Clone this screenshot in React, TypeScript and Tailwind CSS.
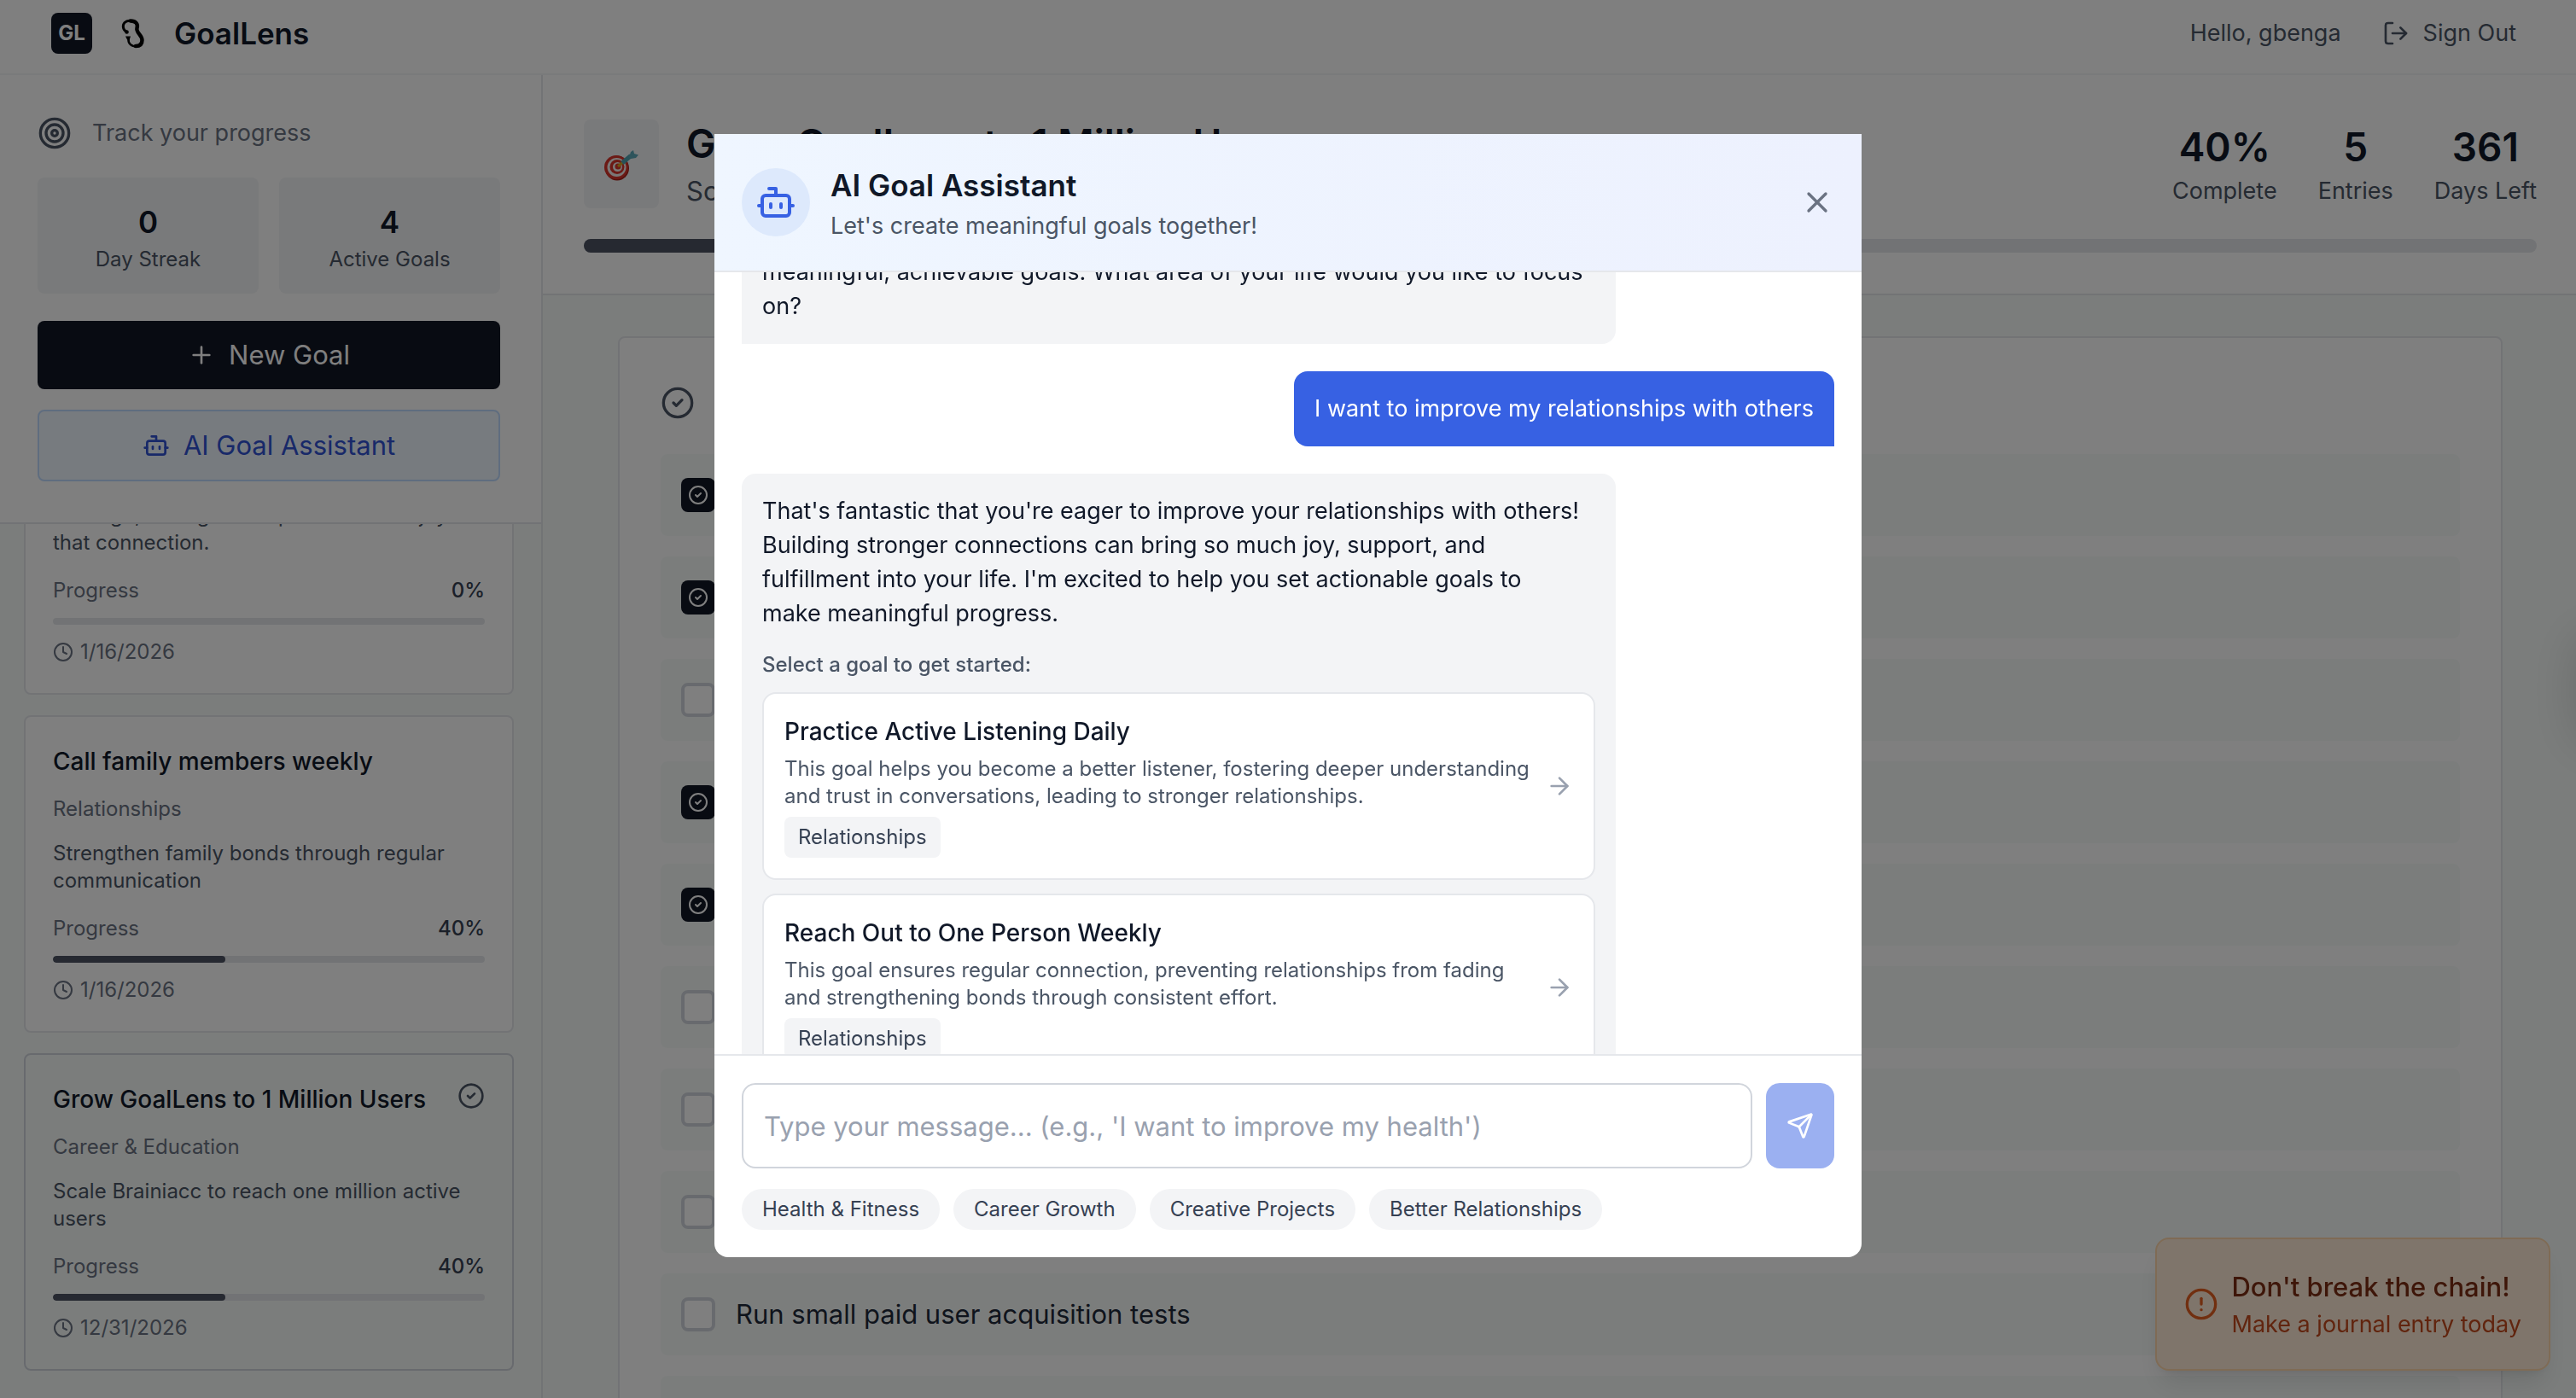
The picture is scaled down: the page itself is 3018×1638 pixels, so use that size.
import { useEffect, useRef } from 'react';
import {
  ArrowRight,
  Bot,
  CircleAlert,
  CircleCheck,
  Clock,
  LogOut,
  Plus,
  Target,
  X,
} from 'lucide-react';

type Goal = {
  title: string;
  category: string;
  description: string;
  progress: number;
  date: string;
  selected?: boolean;
};

const goals: Goal[] = [
  {
    title: 'Reconnect with old friends',
    category: 'Relationships',
    description: 'Through, asking more questions to enjoy that connection.',
    progress: 0,
    date: '1/16/2026',
  },
  {
    title: 'Call family members weekly',
    category: 'Relationships',
    description: 'Strengthen family bonds through regular communication',
    progress: 40,
    date: '1/16/2026',
  },
  {
    title: 'Grow GoalLens to 1 Million Users',
    category: 'Career & Education',
    description: 'Scale Brainiacc to reach one million active users',
    progress: 40,
    date: '12/31/2026',
    selected: true,
  },
];

const steps = [
  { done: true },
  { done: true },
  { done: false },
  { done: true },
  { done: true },
  { done: false },
  { done: false },
  { done: false },
  { done: false, label: 'Run small paid user acquisition tests' },
  { done: false },
];

const suggestions = [
  {
    title: 'Practice Active Listening Daily',
    description:
      'This goal helps you become a better listener, fostering deeper understanding and trust in conversations, leading to stronger relationships.',
    category: 'Relationships',
  },
  {
    title: 'Reach Out to One Person Weekly',
    description:
      'This goal ensures regular connection, preventing relationships from fading and strengthening bonds through consistent effort.',
    category: 'Relationships',
  },
];

const quickPrompts = [
  'Health & Fitness',
  'Career Growth',
  'Creative Projects',
  'Better Relationships',
];

function BrandMark() {
  return (
    <svg width="28" height="36" viewBox="0 0 28 36" fill="none" strokeLinecap="round">
      <path d="M6 16 C1.500 14 1.500 8 4 5.500 C6 3.500 9 3 12 3.500" stroke="black" strokeWidth="3" />
      <path
        d="M11 3.500 C17 3.500 20 7 18.500 12 C17 17 24.500 20 24.500 26 C24.500 31.500 21 33 17 33"
        stroke="black"
        strokeWidth="4.500"
      />
      <path d="M18 33.500 C12 33.500 8 30 8.500 24.500" stroke="black" strokeWidth="2.500" />
      <circle cx="6.500" cy="16.500" r="2.300" fill="black" />
      <path d="M5 21.500 L11 21.500 L9.500 26 L7 25.500 Z" fill="black" />
    </svg>
  );
}

function DartBoard() {
  return (
    <svg width="42" height="42" viewBox="0 -5 42 42" fill="none">
      <ellipse cx="16" cy="21" rx="14" ry="14.500" fill="#a8231a" />
      <ellipse cx="15" cy="20" rx="14" ry="14" fill="#d8342b" />
      <ellipse cx="15.500" cy="20" rx="11" ry="11" fill="#f5f0ee" />
      <ellipse cx="16" cy="19.500" rx="8.500" ry="8.500" fill="#d8342b" />
      <ellipse cx="16.500" cy="19.500" rx="5.500" ry="5.500" fill="#f5f0ee" />
      <circle cx="17" cy="19" r="3.500" fill="#d8342b" />
      <path d="M17 19 L24 13" stroke="#d9a520" strokeWidth="3" />
      <path d="M22 15 L32 6.500" stroke="#4fa3b0" strokeWidth="5" />
      <path d="M30 8 L32 2 L35 0 L36 4 L41 5.500 L38 9 L32 10 Z" fill="#5ca8b8" />
    </svg>
  );
}

function Header() {
  return (
    <header className="flex shrink-0 items-center justify-between border-b-2 border-gray-100 bg-white pt-[15px] pr-[70px] pb-[23px] pl-[60px]">
      <div className="flex items-center">
        <div className="flex size-12 items-center justify-center rounded-lg bg-[#111624] text-2xl leading-8 font-bold text-white">
          GL
        </div>
        <div className="ml-[34px] flex w-7 items-center justify-center">
          <BrandMark />
        </div>
        <span className="ml-[34px] text-[35px] leading-[48px] font-semibold text-gray-900">
          GoalLens
        </span>
      </div>
      <div className="flex items-center gap-12 text-[27px] leading-10 text-gray-600">
        <span>Hello, gbenga</span>
        <button className="flex items-center gap-4">
          <LogOut size={32} />
          Sign Out
        </button>
      </div>
    </header>
  );
}

function GoalCard({ goal }: { goal: Goal }) {
  return (
    <article
      className={
        goal.selected
          ? 'rounded-lg border-2 border-gray-300 bg-[#f7fbf9] p-8 text-2xl leading-8'
          : 'rounded-lg border-2 border-gray-200 bg-white p-8 text-2xl leading-8'
      }
    >
      <div className="flex h-10 items-start justify-between">
        <h3 className="text-[28px] leading-10 font-medium text-gray-900">
          {goal.title}
        </h3>
        {goal.selected && <CircleCheck size={32} className="text-gray-600" />}
      </div>
      <p className="mt-5 text-gray-500">{goal.category}</p>
      <p className="mt-5 line-clamp-2 text-gray-600">{goal.description}</p>
      <div className="mt-6 flex justify-between">
        <span className="text-gray-500">Progress</span>
        <span className="font-medium text-gray-700">{goal.progress}%</span>
      </div>
      <div className="mt-4 h-2 overflow-hidden rounded-full bg-gray-200">
        <div
          className="h-full rounded-full bg-[#4d5362]"
          style={{ width: `${goal.progress}%` }}
        />
      </div>
      <div className="mt-4 flex items-center gap-2 text-gray-500">
        <Clock size={24} />
        {goal.date}
      </div>
    </article>
  );
}

function Sidebar() {
  const listRef = useRef<HTMLDivElement>(null);

  // keep the selected goal (last one) in view
  useEffect(() => {
    if (listRef.current) {
      listRef.current.scrollTop = listRef.current.scrollHeight;
    }
  }, []);

  return (
    <aside className="flex w-[636px] shrink-0 flex-col border-r-2 border-gray-200 bg-[#f7fbf9]">
      <div className="border-b-2 border-gray-200 bg-white py-12 pr-12 pl-11">
        <div className="flex items-center gap-6 text-[27px] leading-10 text-gray-500">
          <Target size={40} className="text-gray-600" />
          Track your progress
        </div>
        <div className="mt-8 grid grid-cols-2 gap-6 text-center">
          <div className="rounded-lg bg-gray-100 p-6">
            <div className="text-[35px] leading-[56px] font-semibold text-gray-900">0</div>
            <div className="text-2xl leading-8 text-gray-600">Day Streak</div>
          </div>
          <div className="rounded-lg bg-gray-100 p-6">
            <div className="text-[35px] leading-[56px] font-semibold text-gray-900">4</div>
            <div className="text-2xl leading-8 text-gray-600">Active Goals</div>
          </div>
        </div>
        <button className="mt-8 flex h-20 w-full items-center justify-center gap-4 rounded-lg bg-[#111624] text-[31px] leading-[48px] text-white">
          <Plus size={32} />
          New Goal
        </button>
        <button className="mt-6 flex h-[84px] w-full items-center justify-center gap-4 rounded-lg border-2 border-blue-200 bg-blue-50 text-[31px] leading-[48px] text-[#3152d2]">
          <Bot size={32} />
          AI Goal Assistant
        </button>
      </div>
      <div
        ref={listRef}
        className="flex-1 space-y-6 overflow-y-auto pt-7 pr-8 pb-8 pl-7 [scrollbar-width:none]"
      >
        {goals.map((goal) => (
          <GoalCard key={goal.title} goal={goal} />
        ))}
      </div>
    </aside>
  );
}

function Stat({ value, label }: { value: string; label: string }) {
  return (
    <div className="text-center">
      <div className="text-[46px] leading-[64px] font-semibold text-gray-900">{value}</div>
      <div className="text-[27px] leading-10 text-gray-600">{label}</div>
    </div>
  );
}

function GoalDetail() {
  return (
    <main className="flex min-w-0 flex-1 flex-col overflow-hidden bg-[#f7fbf9]">
      <section className="border-b-2 border-gray-200 bg-white py-12 pr-[46px] pl-12">
        <div className="flex items-center justify-between">
          <div className="flex items-center gap-8">
            <div className="flex h-[104px] w-[88px] items-center justify-center rounded-lg bg-gray-100">
              <DartBoard />
            </div>
            <div>
              <h1 className="text-[46px] leading-[64px] font-semibold text-gray-900">
                Grow GoalLens to 1 Million Users
              </h1>
              <p className="text-[31px] leading-[48px] text-gray-600">
                Scale Brainiacc to reach one million active users
              </p>
            </div>
          </div>
          <div className="flex gap-12">
            <Stat value="40%" label="Complete" />
            <Stat value="5" label="Entries" />
            <Stat value="361" label="Days Left" />
          </div>
        </div>
        <div className="mt-8 h-4 overflow-hidden rounded-full bg-gray-200">
          <div className="h-full w-2/5 bg-[#4d5362]" />
        </div>
      </section>
      <section className="mt-12 mr-[86px] ml-[88px] rounded-lg border-2 border-gray-200 bg-white p-12">
        <div className="flex h-14 items-center">
          <CircleCheck size={40} className="text-gray-600" />
        </div>
        <ul className="mt-8 space-y-6">
          {steps.map((step, i) => (
            <li key={i} className="flex h-24 items-center gap-6 rounded-lg bg-[#f7fbf9] px-6">
              <button
                role="checkbox"
                aria-checked={step.done}
                aria-label={step.label ?? `Step ${i + 1}`}
                className={
                  step.done
                    ? 'flex size-10 items-center justify-center rounded-lg bg-[#111624] text-white'
                    : 'size-10 rounded-lg border-4 border-gray-300 bg-white'
                }
              >
                {step.done && <CircleCheck size={24} />}
              </button>
              {step.label && (
                <span className="text-[31px] leading-[48px] text-gray-800">{step.label}</span>
              )}
            </li>
          ))}
        </ul>
      </section>
    </main>
  );
}

function AssistantModal() {
  const messagesRef = useRef<HTMLDivElement>(null);

  useEffect(() => {
    if (messagesRef.current) {
      messagesRef.current.scrollTop = 116;
    }
  }, []);

  return (
    <div className="fixed inset-0 flex justify-center bg-black/50 px-8 pt-[157px] pb-[165px]">
      <div
        role="dialog"
        aria-labelledby="assistant-title"
        className="flex w-full max-w-[1344px] flex-col overflow-hidden rounded-b-2xl bg-white"
      >
        <div className="flex items-center justify-between border-b-2 border-gray-200 bg-linear-to-r from-[#eff6ff] to-[#edf1fe] p-8">
          <div className="flex items-center gap-6">
            <div className="flex size-20 items-center justify-center rounded-full bg-[#dde9fc]">
              <Bot size={48} className="text-[#3761e3]" />
            </div>
            <div>
              <h2
                id="assistant-title"
                className="text-[35px] leading-[56px] font-semibold text-gray-900"
              >
                AI Goal Assistant
              </h2>
              <p className="text-[27px] leading-10 text-gray-600">
                Let's create meaningful goals together!
              </p>
            </div>
          </div>
          <button aria-label="Close" className="text-gray-500">
            <X size={40} />
          </button>
        </div>

        <div
          ref={messagesRef}
          className="flex flex-1 flex-col gap-8 overflow-y-auto p-8 text-[27px] leading-10 [scrollbar-width:none]"
        >
          <div className="max-w-4/5 shrink-0 self-start rounded-2xl rounded-bl-none bg-gray-100 p-6 text-gray-900">
            Hi! I'm your AI Goal Assistant. I'm here to help you create
            <br />
            meaningful, achievable goals. What area of your life would you like to focus on?
          </div>
          <div className="max-w-4/5 shrink-0 self-end rounded-2xl rounded-br-none bg-[#3761e3] p-6 text-white">
            I want to improve my relationships with others
          </div>
          <div className="max-w-4/5 shrink-0 self-start rounded-2xl rounded-bl-none bg-gray-100 p-6 text-gray-900">
            <p>
              That's fantastic that you're eager to improve your relationships with others!
              Building stronger connections can bring so much joy, support, and fulfillment into
              your life. I'm excited to help you set actionable goals to
              <br />
              make meaningful progress.
            </p>
            <p className="mt-6 text-2xl leading-8 font-medium text-gray-600">
              Select a goal to get started:
            </p>
            <div className="mt-4 space-y-4">
              {suggestions.map((s) => (
                <button
                  key={s.title}
                  className="flex w-full items-center justify-between gap-4 rounded-2xl border-2 border-gray-200 bg-white p-6 text-left text-2xl leading-8"
                >
                  <span className="flex flex-col items-start gap-2">
                    <span className="text-[28px] leading-10 font-medium text-gray-900">
                      {s.title}
                    </span>
                    <span className="text-gray-600">{s.description}</span>
                    <span className="rounded-lg bg-gray-100 px-4 py-2 text-gray-700">
                      {s.category}
                    </span>
                  </span>
                  <ArrowRight size={32} className="shrink-0 text-gray-400" />
                </button>
              ))}
            </div>
          </div>
        </div>

        <div className="border-t-2 border-gray-200 p-8">
          <form className="flex gap-4" onSubmit={(e) => e.preventDefault()}>
            <input
              type="text"
              aria-label="Message"
              placeholder="Type your message... (e.g., 'I want to improve my health')"
              className="h-[100px] min-w-0 flex-1 rounded-2xl border-2 border-gray-300 px-6 text-[31px] text-gray-900 placeholder:text-gray-400"
            />
            <button
              type="submit"
              aria-label="Send"
              className="flex w-20 items-center justify-center rounded-2xl bg-[#9bb0f1] text-white"
            >
              <svg
                width="32"
                height="32"
                viewBox="0 0 24 24"
                fill="none"
                stroke="currentColor"
                strokeWidth="2"
                strokeLinecap="round"
                strokeLinejoin="round"
              >
                <path d="M14.536 21.686a.5.5 0 0 0 .937-.024l6.500-19a.496.496 0 0 0-.635-.635l-19 6.500a.5.5 0 0 0-.024.937l7.930 3.180a2 2 0 0 1 1.112 1.110z" />
                <path d="m21.854 2.147-10.940 10.939" />
              </svg>
            </button>
          </form>
          <div className="mt-6 flex gap-4">
            {quickPrompts.map((prompt) => (
              <button
                key={prompt}
                className="rounded-full bg-gray-100 px-6 py-2 text-2xl leading-8 text-gray-700"
              >
                {prompt}
              </button>
            ))}
          </div>
        </div>
      </div>
    </div>
  );
}

export default function App() {
  return (
    <div className="flex h-screen flex-col overflow-hidden bg-white font-['Inter',sans-serif]">
      <Header />
      <div className="flex min-h-0 flex-1">
        <Sidebar />
        <GoalDetail />
      </div>

      <div className="fixed top-[740px] left-full h-32 w-20 rounded-2xl shadow-[0_4px_60px_rgba(0,0,0,0.14)]" />

      <div className="fixed right-[30px] bottom-8 flex items-center gap-4 rounded-2xl border-2 border-[#fed7aa] bg-[#ffebd7] p-8 shadow-[0_20px_30px_-6px_rgba(0,0,0,0.1),0_8px_12px_-8px_rgba(0,0,0,0.1)]">
        <CircleAlert size={40} className="text-[#e35f20]" />
        <div>
          <p className="text-[31px] leading-[48px] font-medium text-[#7c2d12]">
            Don't break the chain!
          </p>
          <p className="text-[27px] leading-10 text-[#c2491c]">Make a journal entry today</p>
        </div>
      </div>

      <AssistantModal />
    </div>
  );
}
